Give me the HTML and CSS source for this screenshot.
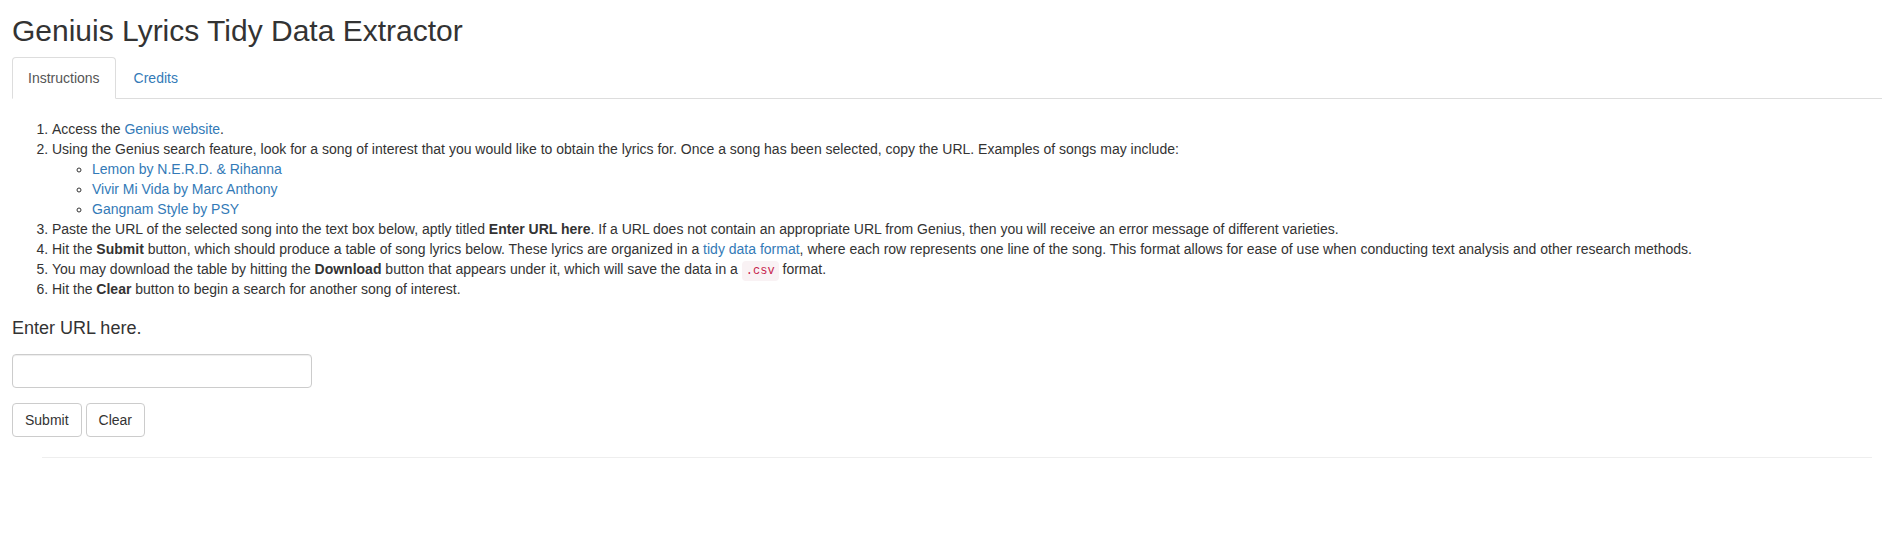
FILE: index.html
```html
<!DOCTYPE html>
<html>
<head>
<meta charset="utf-8">
<title>Geniuis Lyrics Tidy Data Extractor</title>
<link rel="stylesheet" href="styles.css">
</head>
<body>
<div class="container-fluid">
  <h2 class="title">Geniuis Lyrics Tidy Data Extractor</h2>
  <ul class="nav-tabs">
    <li class="tab active"><a href="#">Instructions</a></li>
    <li class="tab"><a href="#">Credits</a></li>
  </ul>
  <div class="tab-content">
    <ol class="steps">
      <li>Access the <a href="#">Genius website</a>.</li>
      <li>Using the Genius search feature, look for a song of interest that you would like to obtain the lyrics for. Once a song has been selected, copy the URL. Examples of songs may include:
        <ul class="examples">
          <li><a href="#">Lemon by N.E.R.D. &amp; Rihanna</a></li>
          <li><a href="#">Vivir Mi Vida by Marc Anthony</a></li>
          <li><a href="#">Gangnam Style by PSY</a></li>
        </ul>
      </li>
      <li>Paste the URL of the selected song into the text box below, aptly titled <b>Enter URL here</b>. If a URL does not contain an appropriate URL from Genius, then you will receive an error message of different varieties.</li>
      <li>Hit the <b>Submit</b> button, which should produce a table of song lyrics below. These lyrics are organized in a <a href="#">tidy data format</a>, where each row represents one line of the song. This format allows for ease of use when conducting text analysis and other research methods.</li>
      <li>You may download the table by hitting the <b>Download</b> button that appears under it, which will save the data in a <code>.csv</code> format.</li>
      <li>Hit the <b>Clear</b> button to begin a search for another song of interest.</li>
    </ol>
    <div class="form-group">
      <label class="control-label" for="url"><span class="label-text">Enter URL here.</span></label>
      <input id="url" class="form-control" type="text">
    </div>
    <div class="buttons">
      <button class="btn" type="button">Submit</button>
      <button class="btn" type="button">Clear</button>
    </div>
    <hr class="divider">
  </div>
</div>
</body>
</html>
```

FILE: styles.css
```css
* {
  box-sizing: border-box;
}

html, body {
  margin: 0;
  padding: 0;
  background: #fff;
}

body {
  font-family: "Liberation Sans", Arial, Helvetica, sans-serif;
  font-size: 14px;
  line-height: 20px;
  color: #333;
}

a {
  color: #337ab7;
  text-decoration: none;
}

.container-fluid {
  padding: 0 0 0 12px;
}

.title {
  margin: 14px 0 10px;
  font-size: 30px;
  font-weight: 500;
  line-height: 33px;
  color: #333;
}

.nav-tabs {
  list-style: none;
  margin: 0;
  padding: 0;
  display: flex;
  border-bottom: 1px solid #ddd;
}

.tab {
  margin-bottom: -1px;
  margin-right: 2px;
}

.tab a {
  display: block;
  padding: 10px 15px;
  line-height: 20px;
  border: 1px solid transparent;
  border-radius: 4px 4px 0 0;
}

.tab.active a {
  color: #555;
  background: #fff;
  border-color: #ddd #ddd transparent;
}

.tab-content {
  padding-top: 20px;
}

.steps {
  margin: 0 0 20px;
  padding-left: 40px;
}

.examples {
  margin: 0;
  padding-left: 40px;
  list-style-type: circle;
}

b {
  font-weight: 700;
}

code {
  font-family: "Liberation Mono", "DejaVu Sans Mono", monospace;
  font-size: 12px;
  line-height: 1;
  padding: 3px 4px;
  color: #c7254e;
  background: #f9f2f4;
  border-radius: 4px;
}

.form-group {
  display: flex;
  flex-direction: column;
  align-items: flex-start;
  margin-bottom: 15px;
  width: 300px;
}

.control-label {
  display: block;
  margin-bottom: 15px;
}

.label-text {
  display: block;
  font-size: 18px;
  font-weight: 500;
  line-height: 19.8px;
  color: #333;
}

.form-control {
  display: block;
  width: 300px;
  height: 34px;
  padding: 6px 12px;
  font-family: inherit;
  font-size: 14px;
  color: #555;
  background: #fff;
  border: 1px solid #ccc;
  border-radius: 4px;
  box-shadow: inset 0 1px 1px rgba(0, 0, 0, 0.075);
}

.buttons {
  display: flex;
  gap: 4px;
}

.btn {
  height: 34px;
  padding: 6px 12px;
  font-family: inherit;
  font-size: 14px;
  line-height: 20px;
  color: #333;
  background: #fff;
  border: 1px solid #ccc;
  border-radius: 4px;
}

.divider {
  margin: 20px 10px 0 30px;
  border: 0;
  border-top: 1px solid #eee;
}
```
